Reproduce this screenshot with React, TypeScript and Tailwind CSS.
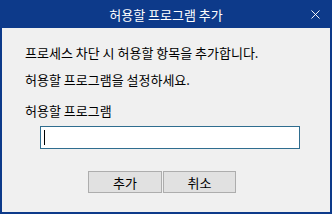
import { X } from "lucide-react"

export default function App() {
  return (
    <div
      className="w-[332px] h-[214px] bg-[#0d3a8a] flex flex-col px-[2px] pb-[2px] text-[13px] text-black"
      style={{ fontFamily: '"Noto Sans CJK KR", "Noto Sans", sans-serif' }}
    >
      {/* title bar */}
      <div className="h-[28px] flex items-center relative text-white">
        <span className="flex-1 text-center text-[13px] leading-none">허용할 프로그램 추가</span>
        <X className="absolute right-[7px] top-[7px] w-[15px] h-[15px]" strokeWidth={1.5} />
      </div>

      {/* body */}
      <div className="flex-1 bg-[#f0f0f0] flex flex-col pl-[23px]">
        <p className="mt-[16px] leading-[18px]">프로세스 차단 시 허용할 항목을 추가합니다.</p>
        <p className="mt-[9px] leading-[18px]">허용할 프로그램을 설정하세요.</p>
        <p className="mt-[13px] leading-[18px]">허용할 프로그램</p>
        <div className="mt-[6px] ml-[15px] w-[260px] h-[23px] bg-white border border-[#2f6d8f] flex items-center pl-[3px]">
          <div className="w-px h-[15px] bg-black" />
        </div>
        <div className="mt-[22px] flex justify-center gap-[1px] pr-[31px]">
          <button className="w-[74px] h-[22px] bg-[#e1e1e1] border border-[#adadad] text-[13px] leading-none">추가</button>
          <button className="w-[73px] h-[22px] bg-[#e1e1e1] border border-[#adadad] text-[13px] leading-none">취소</button>
        </div>
      </div>
    </div>
  )
}
